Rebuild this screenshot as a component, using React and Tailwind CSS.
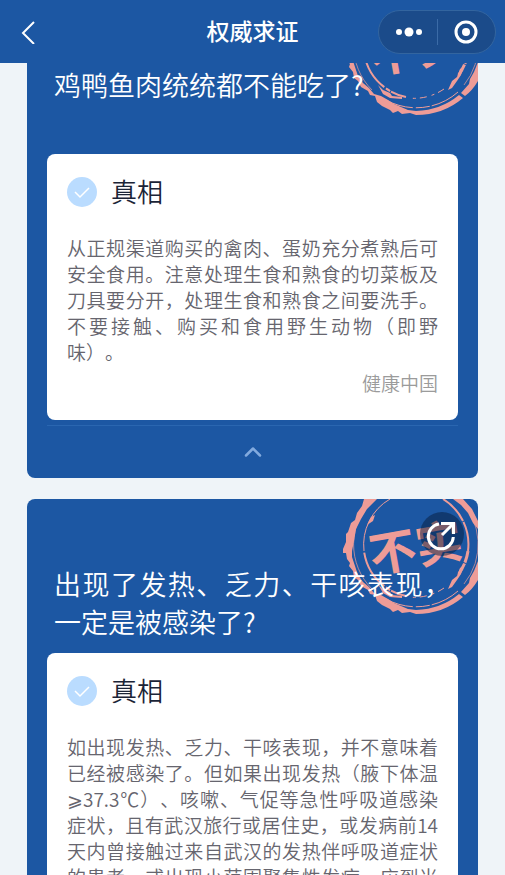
import React from "react";

function Stamp() {
  return (
    <svg className="absolute right-0 top-0 h-[120px] w-[138px]" viewBox="0 0 138 120" fill="none" aria-hidden="true">
      <path
        fill="#ee9c97"
        d="M24 0 L22 7 L17 14 L15 21 L11 24 L8 33 L6 35 L6 43 L3 50 L3 54 L6 54 L7 60 L10 64 L9 67 L13 72 L14 78 L18 81 L21 87 L28 91 L30 95 L35 96 L37 102 L42 106 L50 110 L53 113 L58 111 L62 114 L70 113 L76 115 L76 111 L68 110 L61 107 L54 104 L48 100 L41 96 L34 94 L29 88 L23 83 L18 76 L15 67 L12 58 L12 52 L14 42 L16 30 L21 20 L27 10 L37 0 Z"
      />
      <path fill="#ee9c97" d="M76 111 Q101 110 119 95 L123 98 Q103 115 76 115 Z M121 93 L129 84 L130 79 L134 72 L138 62 V81 Q132 91 125 96 Z M113 0 L123 0 L132 10 L138 22 V30 L133 24 L128 14 L121 6 Z" />
      <g stroke="#ee9c97">
        <path d="M118 92 A63 63 0 0 1 46 100" strokeWidth="1" strokeDasharray="30 2 14 3" />
        <path d="M32 90 A63 63 0 0 1 33 0" strokeWidth="1" strokeOpacity="0.7" />
        <path d="M119 0 A63 63 0 0 1 124 85" strokeWidth="1" strokeOpacity="0.7" />
        <path d="M128 52 A53 53 0 0 1 118 76" strokeWidth="3" strokeDasharray="12 1" />
        <path d="M104 89 A53 53 0 0 1 68 98" strokeWidth="1" strokeDasharray="7 4 3 5" />
        <path d="M66 97 A53 53 0 0 1 24 52" strokeWidth="2" strokeDasharray="16 1 5 2 40" />
        <path d="M24 52 A53 53 0 0 1 50 0" strokeWidth="1" />
        <path d="M103 0 A53 53 0 0 1 128 52" strokeWidth="2" strokeDasharray="30 1" />
      </g>
      <path fill="#ee9c97" d="M108 90 L112 81 L117 77 L120 69 L124 66 L121 75 L117 81 L112 88 Z M27 26 L31 18 L35 16 L33 22 Z M38 85 L43 90 L50 93 L52 96 L62 97 L62 99 L50 98 L43 94 Z" />
      <g transform="rotate(-10 76 45)">
        <text x="28" y="66" fontSize="47" fontWeight="700" fill="#ee9c97" className="font-['Noto_Sans_CJK_SC',sans-serif]">不实</text>
      </g>
    </svg>
  );
}

function ShareButton() {
  return (
    <button aria-label="分享" className="absolute right-[14px] top-[13px] size-11 rounded-full bg-[#061c3c]/50 text-white">
      <svg viewBox="0 0 44 44" className="size-11" fill="none" stroke="currentColor" strokeWidth="3">
        <path d="M19 12 A12.5 12.5 0 1 0 33.3 25" />
        <path d="M21 11.5 H33.5 V22 M22 23 L33 12" />
      </svg>
    </button>
  );
}

function FactCard({ title, source, children, share }) {
  return (
    <article className="relative overflow-hidden rounded-lg bg-[#1c57a3] px-5 pt-[66px]">
      <Stamp />
      <h2 className="relative min-h-[88px] px-[7px] text-justify text-[27px] font-[350] leading-[38px] text-white">{title}</h2>
      {share && <ShareButton />}
      <section className="rounded-lg bg-white px-5 pb-6 pt-5">
        <h3 className="mb-[25px] flex h-9 items-center gap-[14px] text-[26px] font-[350] text-[#1b2437]">
          <svg className="size-[30px]" viewBox="0 0 30 30" fill="none" aria-hidden="true">
            <circle cx="15" cy="15" r="15" fill="#badcff" />
            <path d="M8 15 L13 20 L22 11" stroke="#fff" strokeWidth="1.5" />
          </svg>
          <span className="pb-[3px]">真相</span>
        </h3>
        <p className="text-justify text-[19px] font-[350] leading-[26px] text-[#66656e]">{children}</p>
        <p className="mt-[5px] text-right text-[19px] font-[350] leading-[26px] text-[#9b9b9b]">{source}</p>
      </section>
      <div className="mt-[5px] flex h-[53px] items-center justify-center border-t border-[#2a66b0]">
        <button aria-label="收起" className="p-2 text-[#82aade]">
          <svg className="h-[10px] w-[18px]" viewBox="0 0 18 10" fill="none" stroke="currentColor" strokeWidth="2.5" strokeLinecap="round" strokeLinejoin="round">
            <path d="M2 8.5 L9 1.5 L16 8.5" />
          </svg>
        </button>
      </div>
    </article>
  );
}

export default function App() {
  return (
    <div lang="zh-CN" className="h-screen overflow-hidden bg-[#eff4f8] font-['Noto_Sans_CJK_SC',sans-serif] [text-spacing-trim:space-all]">
      <header className="fixed inset-x-0 top-0 z-10 grid h-[63px] grid-cols-[1fr_auto_1fr] items-center bg-[#1c57a3] px-[9px] text-white">
        <button aria-label="返回" className="w-9 pl-3">
          <svg className="h-6 w-4" viewBox="0 0 16 24" fill="none" stroke="currentColor" strokeWidth="2">
            <path d="M13 2 L2 13 L13 24" />
          </svg>
        </button>
        <h1 className="pb-[2px] text-[23px] font-medium">权威求证</h1>
        <div className="flex h-11 w-[118px] items-center justify-self-end rounded-full border border-[#33659f] bg-[#1b4b8a]">
          <button aria-label="更多" className="flex flex-1 justify-center">
            <svg className="h-3 w-7" viewBox="0 0 28 12" fill="currentColor">
              <circle cx="5" cy="6" r="3" />
              <circle cx="15" cy="6" r="4.5" />
              <circle cx="25" cy="6" r="3" />
            </svg>
          </button>
          <span className="h-[26px] w-px bg-[#3b6ba7]" />
          <button aria-label="关闭" className="flex flex-1 justify-center">
            <svg className="size-6" viewBox="0 0 24 24" fill="none" stroke="currentColor" strokeWidth="3">
              <circle cx="12" cy="12" r="10" />
              <circle cx="12" cy="12" r="4" fill="currentColor" stroke="none" />
            </svg>
          </button>
        </div>
      </header>
      <main className="flex flex-col gap-[21px] px-[27px]">
        <FactCard title="鸡鸭鱼肉统统都不能吃了?" source="健康中国">
          从正规渠道购买的禽肉、蛋奶充分煮熟后可安全食用。注意处理生食和熟食的切菜板及刀具要分开，处理生食和熟食之间要洗手。不要接触、购买和食用野生动物（即野味）。
        </FactCard>
        <FactCard title="出现了发热、乏力、干咳表现，一定是被感染了?" source="健康中国" share>
          如出现发热、乏力、干咳表现，并不意味着已经被感染了。但如果出现发热（腋下体温⩾37.3℃）、咳嗽、气促等急性呼吸道感染症状，且有武汉旅行或居住史，或发病前14天内曾接触过来自武汉的发热伴呼吸道症状的患者，或出现小范围聚集性发病，应到当地医疗机构及时就诊。
        </FactCard>
      </main>
    </div>
  );
}
